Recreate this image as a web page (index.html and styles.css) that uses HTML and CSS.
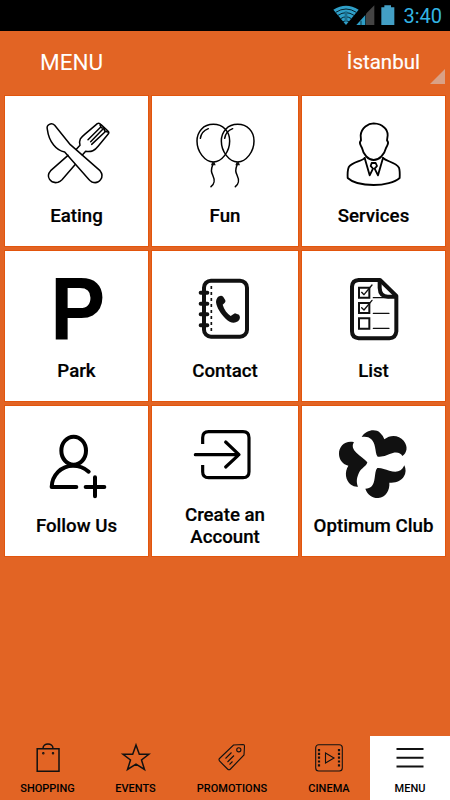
FILE: index.html
```html
<!DOCTYPE html>
<html lang="en">
<head>
    <meta charset="UTF-8">
    <title>Menu</title>
    <link rel="stylesheet" href="styles.css">
</head>
<body>
    <div class="status">
        <svg class="signals" width="62" height="22" viewBox="326 12 186 66">
            <path fill="#2f9fc8" d="M327 29Q365 6 403 29L365 75Z"/>
            <path class="wifi-lines" d="M334 37Q365 17 396 37M341 46Q365 30 389 46M349 56Q365 45 381 56M356 65Q365 59 374 65"/>
            <path fill="#1b6f90" d="M361 34h8v30h-8z"/>
            <path fill="#444" d="M425 41L450 16V75H425Z"/>
            <path fill="#2f9fc8" d="M396 75L423 45V75Z"/>
            <path fill="#000" d="M409 62h2v13h-2z"/>
            <path fill="#439fc5" d="M471 22h9v-6h20v6h10v53h-39z"/>
        </svg>
        <span class="clock">3:40</span>
    </div>

    <div class="header">
        <h1>MENU</h1>
        <div class="city">İstanbul</div>
        <div class="corner"></div>
    </div>

    <div class="tiles">
        <a class="tile">
            <svg class="icon thin" viewBox="15 12 429 291">
                <path d="M204 190L152 236C136 254 152 276 174 271Q180 269 186 263L225 218"/>
                <path d="M229 172L240 160C236 143 242 137 254 127L292 95Q298 92 303 98L324 117Q329 121 324 127L295 162C284 176 275 181 257 178L247 189"/>
                <path d="M264 143L300 107M272 149L309 111M275 157L318 117M300 99L304 107L312 108L314 117L323 120" />
                <path d="M142 112C138 97 155 91 164 100L211 158L300 236C315 254 298 278 276 270Q270 267 266 262L194 180C170 176 147 151 142 112Z"/>
            </svg>
            <span class="label">Eating</span>
        </a>
        <a class="tile">
            <svg class="icon thin" viewBox="6 12 438 291">
                <g id="balloon">
                    <path d="M190 97C160 97 141 119 141 147C141 179 164 209 190 210C216 209 239 179 239 147C239 118 219 97 190 97Z"/>
                    <path d="M151 139C153 125 162 115 175 110"/>
                    <path class="solid" d="M187 209h6l4 11h-14z"/>
                    <path d="M188 219C182 235 184 240 188 249C196 266 194 275 183 284"/>
                </g>
                <use href="#balloon" x="73"/>
            </svg>
            <span class="label">Fun</span>
        </a>
        <a class="tile">
            <svg class="icon person" viewBox="6 12 429 291">
                <path d="M221 94C205 94 184 107 182 130L183 145Q177 151 182 160L186 168C190 188 205 204 221 204C238 204 253 188 258 168L262 160Q267 151 261 145L263 130Q263 115 252 106Q242 95 221 94Z"/>
                <path d="M194 198C185 209 156 209 146 226Q142 236 143 258C158 272 190 279 221 279C252 279 285 271 299 258Q300 236 297 227C286 210 260 209 249 198"/>
                <path d="M194 198L209 250L219 230L212 222L215 213H227L231 222L224 230L234 250L249 198"/>
            </svg>
            <span class="label">Services</span>
        </a>

        <a class="tile">
            <svg class="icon" viewBox="15 9 429 291">
                <text class="park" transform="translate(151 277) scale(.93 1)">P</text>
            </svg>
            <span class="label">Park</span>
        </a>
        <a class="tile">
            <svg class="icon book" viewBox="456 9 438 291">
                <rect x="612" y="98" width="129" height="168" rx="21"/>
                <path class="holes" d="M602 134h20M602 167h20M602 199h20M602 232h20"/>
                <path class="dash" d="M634 114V252"/>
                <path class="solid" d="M652 149C658 143 665 141 670 147L676 157C678 163 672 167 668 170C672 185 682 197 692 204Q699 199 705 196L717 200Q724 210 714 220C701 228 689 223 677 212C662 197 650 179 648 162Q648 154 652 149Z"/>
            </svg>
            <span class="label">Contact</span>
        </a>
        <a class="tile">
            <svg class="icon book" viewBox="231 9 429 291">
                <path d="M401 96H465L514 144V250Q512 270 493 271H401Q381 269 381 250V116Q382 97 401 96Z"/>
                <path d="M464 98V120Q465 146 489 146H512"/>
                <path class="checks" d="M402 119h31v30h-31zM402 165h31v30h-31zM402 211h31v31h-31z"/>
                <path class="rules" d="M410 133L417 140L441 111M410 179L417 186L441 157M445 149H492M445 196H492M445 241H492"/>
            </svg>
            <span class="label">List</span>
        </a>

        <a class="tile">
            <svg class="icon bold" viewBox="15 9 429 291">
                <ellipse cx="221" cy="143" rx="37" ry="42"/>
                <path d="M229 252H155C156 216 184 188 219 188Q246 188 266 206M257 252H313M285 223V280"/>
            </svg>
            <span class="label">Follow Us</span>
        </a>
        <a class="tile">
            <svg class="icon enter" viewBox="6 9 438 291">
                <path d="M158 123V104Q158 86 176 86H279Q297 86 297 104V206Q297 224 279 224H176Q158 224 158 206V186"/>
                <path class="round" d="M136 155H266M227 117L267 155L227 192"/>
            </svg>
            <span class="label">Create an Account</span>
        </a>
        <a class="tile">
            <svg class="icon" viewBox="6 9 429 291">
                <path fill="#111" d="M185 102C197 81 226 76 240 89Q250 98 253 109C271 94 297 96 311 113C325 131 321 149 307 159C302 147 285 145 269 153Q250 163 233 161C227 155 228 144 225 132C221 107 205 98 185 102Z"/>
                <path fill="#111" d="M162 118C137 111 116 130 117 153C117 170 129 185 145 188C133 207 136 232 153 245Q162 252 174 251C168 237 170 223 178 207C185 195 199 190 202 178C194 168 181 160 170 150C158 139 155 128 162 118Z"/>
                <path fill="#111" d="M313 187C304 207 289 209 268 203C255 199 244 194 232 195C226 201 226 213 224 225C221 248 213 257 196 257C203 277 219 286 235 285C257 283 270 262 268 239C287 241 304 234 312 220Q321 204 313 187Z"/>
            </svg>
            <span class="label">Optimum Club</span>
        </a>
    </div>

    <div class="tabs">
        <a class="tab">
            <svg class="tab-icon" viewBox="0 0 32 32">
                <path d="M5.2 8.7H27v22.5H5.2zM11 8.5C11 2.5 21 2.5 21 8.5"/>
                <circle cx="11.3" cy="13.3" r=".5"/><circle cx="21" cy="13.3" r=".5"/>
            </svg>
            SHOPPING
        </a>
        <a class="tab">
            <svg class="tab-icon" viewBox="0 0 32 32">
                <path d="M16 5L19.3 14.3H28.8L21.5 20L24.5 29.5L16 24.2L7.5 29.5L10.5 20L3 14.3H12.7Z"/>
            </svg>
            EVENTS
        </a>
        <a class="tab">
            <svg class="tab-icon fine" viewBox="0 0 32 32">
                <path d="M17.5 5L27 4.5Q28.5 4.500 28.5 6L28 15L14.500 29Q13 30.5 11.5 29L3.5 21Q2.5 19.5 3.5 18.5ZM9.5 18.5L15.5 12.5M11.5 22L18 15.5M13.5 24.5L16.5 21.5"/>
                <circle cx="22.8" cy="9.8" r="2.1"/>
            </svg>
            PROMOTIONS
        </a>
        <a class="tab">
            <svg class="tab-icon fine" viewBox="0 0 32 32">
                <rect x="2.7" y="4.7" width="26.6" height="26.3" rx="3"/>
                <path d="M12.5 13V23L21 18Z"/>
                <path class="film" d="M6 9V27.500M26 9V27.500"/>
            </svg>
            CINEMA
        </a>
        <a class="tab active">
            <svg class="tab-icon burger" viewBox="0 0 32 32">
                <path d="M2.5 9H29.5M2.5 17.7H29.5M2.5 26.4H29.5"/>
            </svg>
            MENU
        </a>
    </div>
</body>
</html>
```

FILE: styles.css
```css
* {
    box-sizing: border-box;
}
body {
    margin: 0;
    height: 800px;
    display: flex;
    flex-direction: column;
    background: #e26424;
    color: #000;
    font-family: Roboto, sans-serif;
    overflow: hidden;
}
.status {
    height: 31px;
    background: #000;
    display: flex;
    justify-content: flex-end;
    padding: 4px 8px 0 0;
}
.signals {
    margin-right: 8px;
}
.wifi-lines {
    fill: none;
    stroke: #06202b;
    stroke-width: 3;
}
.clock {
    color: #33b5e5;
    font-size: 20px;
    line-height: 24px;
}
.header {
    position: relative;
    height: 65px;
    display: flex;
    justify-content: space-between;
    padding: 0 30px 0 40px;
    color: #fff;
    line-height: 62px;
}
.header h1 {
    margin: 0;
    font-size: 22.5px;
    font-weight: 400;
}
.city {
    font-size: 20.5px;
    -webkit-text-stroke: 0.2px #fff;
}
.corner {
    position: absolute;
    right: 5px;
    bottom: 12px;
    width: 15px;
    height: 15px;
    background: #d9a186;
    clip-path: polygon(100% 0, 100% 100%, 0 100%);
}
.tiles {
    display: grid;
    grid-template-columns: 143px 146px 143px;
    grid-auto-rows: 150.3px;
    gap: 4.7px 4px;
    padding: 0 5px;
}
.tile {
    display: flex;
    flex-direction: column;
    align-items: center;
    background: #fff;
    outline: 1px solid #e2550c;
}
.icon {
    width: 100%;
    height: 97px;
    overflow: visible;
    fill: none;
    stroke-linejoin: round;
    stroke-linecap: round;
}
.thin {
    stroke: #000;
    stroke-width: 4.5;
}
.person {
    stroke: #000;
    stroke-width: 5.5;
}
.solid {
    fill: #111;
    stroke: none;
}
.park {
    font: bold 266px "Liberation Sans", sans-serif;
    fill: #000;
}
.book {
    stroke: #111;
    stroke-width: 12;
}
.book .dash {
    stroke-width: 5;
    stroke-dasharray: 9 9;
    stroke-linecap: butt;
}
.book .solid {
    stroke: none;
}
.book .checks {
    stroke-width: 6;
    stroke-linejoin: miter;
}
.book .rules {
    stroke-width: 4;
}
.bold {
    stroke: #000;
    stroke-width: 12;
}
.enter {
    stroke: #000;
    stroke-width: 9.5;
    stroke-linecap: butt;
}
.round {
    stroke-linecap: round;
}
.label {
    height: 46px;
    width: 125px;
    display: flex;
    align-items: center;
    justify-content: center;
    text-align: center;
    font-size: 18.7px;
    font-weight: 500;
    line-height: 22px;
    -webkit-text-stroke: 0.2px #000;
}
.tabs {
    display: grid;
    grid-template-columns: 95px 81px 112px 82px 80px;
    height: 64px;
    margin-top: auto;
}
.tab {
    display: flex;
    flex-direction: column;
    align-items: center;
    padding-top: 4px;
    font-size: 11px;
    font-weight: 500;
    line-height: 13px;
}
.tab-icon {
    width: 32px;
    height: 32px;
    margin-bottom: 10px;
    fill: none;
    stroke: #111;
    stroke-width: 1.5;
}
.fine {
    stroke-width: 1.1;
}
.film {
    stroke-width: 2.2;
    stroke-dasharray: 2.2 1.6;
}
.active {
    background: #fff;
}
.burger {
    stroke-width: 2;
}
```
